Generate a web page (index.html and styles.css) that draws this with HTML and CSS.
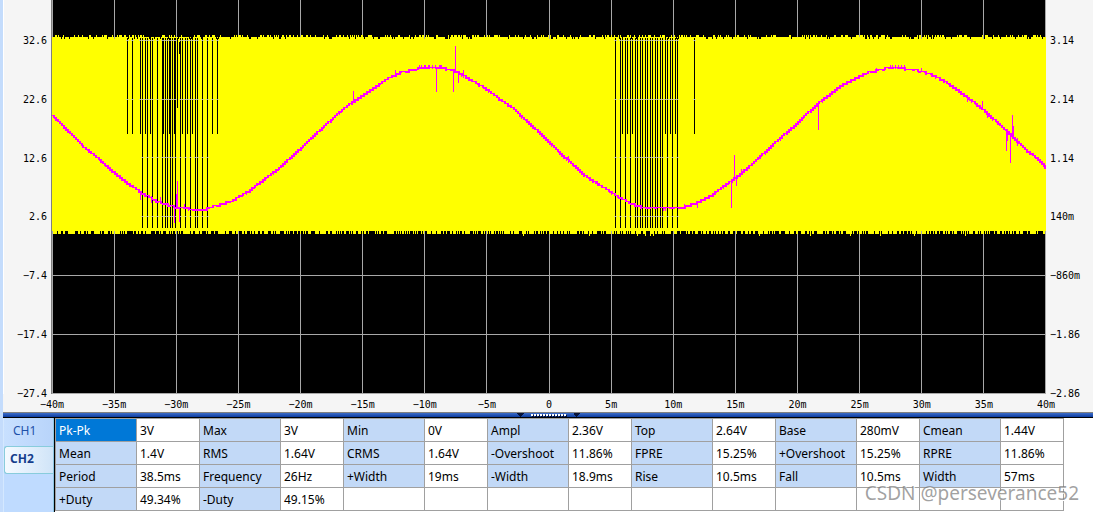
FILE: index.html
```html
<!DOCTYPE html>
<html lang="en">
<head>
<meta charset="utf-8">
<title>Oscilloscope</title>
<link rel="stylesheet" href="styles.css">
</head>
<body>
<div class="app">
  <main class="scope">
    <div class="y-axis y-left"><span>32.6</span><span>22.6</span><span>12.6</span><span>2.6</span><span>−7.4</span><span>−17.4</span><span>−27.4</span></div>
    <svg class="plot" viewBox="51 0 995 394" preserveAspectRatio="none" shape-rendering="crispEdges" role="img" aria-label="Waveforms">
      <rect class="plot-bg" x="51" y="0" width="995" height="394"/>
      <path class="grid-line" id="grid"/>
      <path class="ch1" id="band"/>
      <path class="gap" id="gaps"/>
      <path class="grid-soft" id="crossSoft"/>
      <path class="grid-line" id="cross"/>
      <path class="ch2" id="wave"/>
      <rect class="axis" x="51" y="0" width="1" height="394"/>
    </svg>
    <div class="y-axis y-right"><span>3.14</span><span>2.14</span><span>1.14</span><span>140m</span><span>−860m</span><span>−1.86</span><span>−2.86</span></div>
    <div class="x-axis"><span>−40m</span><span>−35m</span><span>−30m</span><span>−25m</span><span>−20m</span><span>−15m</span><span>−10m</span><span>−5m</span><span>0</span><span>5m</span><span>10m</span><span>15m</span><span>20m</span><span>25m</span><span>30m</span><span>35m</span><span>40m</span></div>
  </main>
  <div class="splitter">
    <svg width="64" height="5" viewBox="0 0 64 5" shape-rendering="crispEdges" aria-hidden="true">
      <path fill="#061238" d="M1 0h7v1h-1v1h-1v1h-1v1h-1v-1h-1v-1h-1v-1h-1zM58 0h6v1h-1v1h-1v1h-1v1h-1v-1h-1v-1h-1z"/>
      <path stroke="#061238" stroke-width="2" stroke-dasharray="2 1" d="M16 3h35"/>
      <path stroke="#fff" stroke-width="2" stroke-dasharray="2 1" d="M15 2h35"/>
    </svg>
  </div>
  <section class="panel">
    <div class="tabs" role="tablist">
      <button class="tab" type="button" role="tab" aria-selected="false">CH1</button>
      <button class="tab active" type="button" role="tab" aria-selected="true">CH2</button>
    </div>
    <div class="readout">
      <table class="measures">
        <tbody>
        <tr><th class="selected">Pk-Pk</th><td>3V</td><th>Max</th><td>3V</td><th>Min</th><td>0V</td><th>Ampl</th><td>2.36V</td><th>Top</th><td>2.64V</td><th>Base</th><td>280mV</td><th>Cmean</th><td>1.44V</td></tr>
        <tr><th>Mean</th><td>1.4V</td><th>RMS</th><td>1.64V</td><th>CRMS</th><td>1.64V</td><th>-Overshoot</th><td>11.86%</td><th>FPRE</th><td>15.25%</td><th>+Overshoot</th><td>15.25%</td><th>RPRE</th><td>11.86%</td></tr>
        <tr><th>Period</th><td>38.5ms</td><th>Frequency</th><td>26Hz</td><th>+Width</th><td>19ms</td><th>-Width</th><td>18.9ms</td><th>Rise</th><td>10.5ms</td><th>Fall</th><td>10.5ms</td><th>Width</th><td>57ms</td></tr>
        <tr><th>+Duty</th><td>49.34%</td><th>-Duty</th><td>49.15%</td><td></td><td></td><td></td><td></td><td></td><td></td><td></td><td></td><td></td><td></td></tr>
        </tbody>
      </table>
    </div>
  </section>
  <div class="watermark">CSDN @perseverance52</div>
</div>
<script src="scope.js"></script>
</body>
</html>
```
FILE: styles.css
```css
* { box-sizing: border-box; }
body {
  margin: 0;
  background: #fff;
  color: #000;
  font-family: "Noto Sans", "Open Sans", sans-serif;
  font-size: 12px;
  overflow: hidden;
}
.app {
  position: relative;
  display: flex;
  flex-direction: column;
  min-height: 100vh;
  border-left: 3px solid #c4dcfc;
}
.scope {
  display: grid;
  grid-template-columns: 48px 1fr 47px;
  grid-template-rows: 394px 18px;
  background: #f5f5f5;
  font: 10px/12px "DejaVu Sans Mono", monospace;
}
.y-axis {
  display: flex;
  flex-direction: column;
  justify-content: space-between;
  padding: 41px 4px 0;
}
.y-axis span {
  display: flex;
  align-items: center;
  height: 0;
}
.y-left { align-items: flex-end; border-left: 1px solid #fff; }
.plot { display: block; width: 100%; height: 394px; }
.plot-bg { fill: #000; }
.grid-line { fill: #a8a8a8; }
.grid-soft { fill: #dcdc90; }
.axis { fill: #808080; }
.ch1 { fill: #ff0; }
.gap { fill: #000; }
.ch2 { fill: #f0f; }
.x-axis {
  grid-column: 2;
  display: flex;
  justify-content: space-between;
  padding: 5px 0 0 1px;
}
.x-axis span {
  display: flex;
  justify-content: center;
  width: 0;
}
.splitter {
  display: flex;
  justify-content: center;
  height: 6px;
  border-top: 1px solid #808080;
  border-bottom: 1px solid #000;
  background: linear-gradient(#3c6cc8, #0c3ca0);
}
.panel {
  flex: 1;
  display: grid;
  grid-template-columns: 51px 1fr;
  background: #bfdbff;
}
.tabs {
  display: flex;
  flex-direction: column;
  border-left: 1px solid #d4e8ff;
  border-right: 1px solid #8cc4e0;
}
.tab {
  height: 28px;
  padding: 0 0 4px 9px;
  border: 0;
  background: linear-gradient(90deg, #c8e0ff, #b8d4fa);
  color: #1e50a8;
  font: inherit;
  text-align: left;
}
.tab.active {
  padding-left: 5px;
  border: 1px solid #88ccdc;
  border-right: 0;
  border-radius: 3px 0 0 3px;
  background: linear-gradient(90deg, #f4faff, #d0e4f8);
  color: #153e8c;
  font-weight: bold;
}
.readout {
  border-left: 1px solid #000;
  background: #fff;
}
.measures {
  width: 1009px;
  table-layout: fixed;
  border-collapse: collapse;
}
.measures th,
.measures td {
  width: 63px;
  height: 23px;
  padding: 2px 0 0 3px;
  border: 1px solid #a0a0a0;
  font-weight: normal;
  line-height: 20px;
  text-align: left;
  white-space: nowrap;
}
.measures th,
.measures td:nth-child(odd) { width: 81px; }
.measures th { background: #c2d9f7; }
.measures th.selected { background: #0078d7; color: #fff; }
.watermark {
  position: absolute;
  right: 14px;
  bottom: 6px;
  color: rgba(120, 120, 120, 0.7);
  font-family: "Noto Sans", sans-serif;
  font-size: 19px;
  line-height: 26px;
  text-shadow: 1px 1px 0 #fff;
}
```
FILE: scope.js
```javascript
const rect = (x, y, w, h) => `M${x} ${y}h${w}v${h}h${-w}z`;
const draw = (id, d) => document.getElementById(id).setAttribute('d', d);

let seed = 7;
const random = () => {
  seed = (seed * 1103515245 + 12345) % 2147483648;
  return seed / 2147483648;
};

// Graticule
const columns = [52, 114, 176, 238, 300, 362, 424, 486, 549, 611, 673, 735, 797, 859, 921, 983, 1045];
const rows = [40, 99, 157, 216, 275, 334, 393];
draw('grid', columns.map(x => rect(x, 0, 1, 394)).join('') + rows.map(y => rect(52, y, 994, 1)).join(''));

// CH1: dense PWM band with ragged edges
let band = rect(52, 39, 994, 192);
for (let x = 52; x < 1046; x++) {
  const r = random();
  const top = r < 0.28 ? 35 : r < 0.86 ? 37 : 39;
  const bottom = random() < 0.45 ? 231 : random() < 0.97 ? 234 : 236;
  band += rect(x, top, 1, 39 - top) + rect(x, 231, 1, bottom - 231);
}
draw('band', band);

// CH1: low pulses
const full = [142, 147, 152, 157, 162, 165, 167, 170, 172, 175, 180, 185, 190, 195, 197, 202, 207,
  615, 620, 625, 630, 635, 637, 640, 642, 645, 647, 650, 652, 655, 657, 660, 662, 667, 672, 677];
const half = [127, 132, 140, 145, 150, 163, 169, 174, 182, 187, 192, 212, 217,
  622, 627, 632, 665, 670, 675, 694];
draw('gaps', full.map(x => rect(x, 38, 1, 190)).join('') + half.map(x => rect(x, 38, 1, 96)).join('')
  + rect(177, 38, 1, 70) + rect(179, 42, 1, 12));
let soft = '';
let cross = '';
for (const y of rows.slice(0, 4)) {
  for (const x of y < 130 ? full.concat(half) : full) {
    soft += rect(x - 1, y, 3, 1);
    cross += rect(x, y, 1, 1);
  }
}
draw('crossSoft', soft);
draw('cross', cross);

// CH2: sampled sine
const samples = [[52, 115], [68, 130], [84, 147], [98, 158], [114, 172], [128, 183], [142, 193], [158, 202],
  [175, 207], [190, 209], [207, 209], [217, 206], [233, 201], [250, 191], [263, 181], [278, 170], [289, 160],
  [300, 150], [320, 131], [342, 111], [355, 101], [370, 91], [388, 79], [400, 73], [418, 69], [430, 67],
  [447, 69], [458, 72], [473, 81], [485, 88], [500, 99], [513, 108], [526, 120], [537, 130], [549, 141],
  [557, 149], [565, 157], [585, 175], [603, 187], [617, 196], [630, 203], [645, 208], [665, 209], [682, 208],
  [697, 203], [713, 195], [728, 184], [740, 175], [752, 165], [765, 153], [778, 141], [794, 127], [810, 112],
  [818, 104], [830, 95], [840, 87], [853, 80], [868, 73], [885, 69], [897, 68], [915, 70], [930, 74],
  [945, 81], [958, 90], [970, 99], [983, 109], [994, 119], [1005, 129], [1017, 140], [1028, 151],
  [1040, 160], [1046, 167]];
const level = x => {
  let i = 1;
  while (i < samples.length - 1 && samples[i][0] < x) i++;
  const [x0, y0] = samples[i - 1];
  const [x1, y1] = samples[i];
  return y0 + (y1 - y0) * (x - x0) / (x1 - x0);
};
const stepped = x => Math.round(level(x) / 2) * 2 - 1;
let wave = '';
let thick = 1;
for (let x = 52; x < 1046; x++) {
  const a = stepped(x);
  const b = stepped(x + 2);
  if (x % 3 === 0) thick = random() < 0.65 ? 2 : 1;
  wave += rect(x, Math.min(a, b), 1, Math.abs(a - b) + thick);
}
for (const x of [419, 421, 424, 425, 428, 429, 432, 435, 439, 440, 441, 890, 892, 895, 898, 901, 904]) {
  wave += rect(x, 65, 1, 4);
}
const spikes = [[140, 192, 200], [151, 196, 203], [160, 197, 204], [174, 207, 223], [176, 194, 207],
  [177, 181, 208], [179, 208, 222], [184, 204, 209], [353, 91, 101], [395, 70, 75], [436, 68, 92],
  [453, 72, 92], [455, 46, 73], [458, 72, 83], [463, 70, 78], [568, 156, 163], [597, 181, 186],
  [684, 204, 208], [697, 203, 208], [731, 182, 208], [734, 155, 181], [736, 178, 186], [741, 169, 175],
  [818, 103, 130], [876, 68, 72], [921, 68, 72], [967, 97, 102], [982, 101, 110], [987, 111, 118],
  [1006, 131, 151], [1007, 131, 141], [1010, 134, 163], [1012, 115, 137], [1013, 126, 138], [1017, 138, 146]];
draw('wave', wave + spikes.map(([x, from, to]) => rect(x, from, 1, to - from)).join(''));
```
